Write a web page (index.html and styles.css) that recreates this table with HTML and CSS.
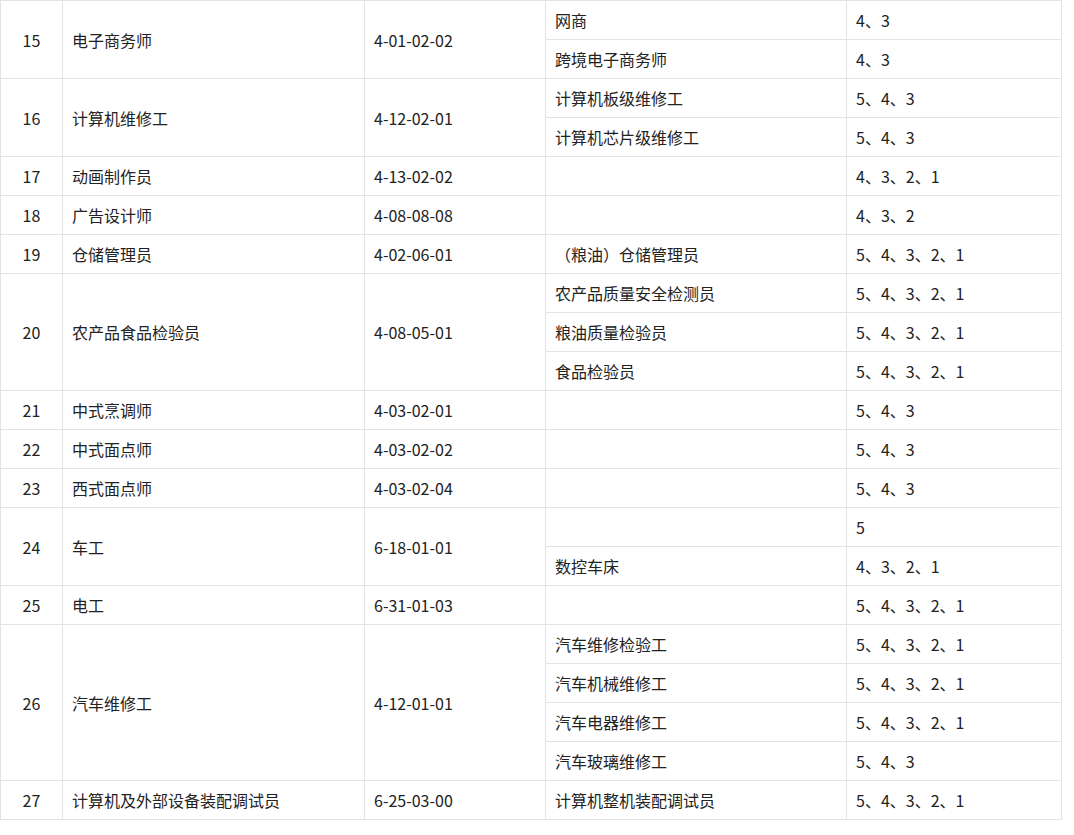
FILE: index.html
```html
<!DOCTYPE html>
<html lang="zh-CN">
<head>
<meta charset="utf-8">
<link rel="stylesheet" href="styles.css">
</head>
<body>
<table class="grid">
<colgroup>
<col class="c-no"><col class="c-name"><col class="c-code"><col class="c-sub"><col class="c-level">
</colgroup>
<tbody>
<tr><td class="no" rowspan="2">15</td><td rowspan="2">电子商务师</td><td rowspan="2">4-01-02-02</td><td>网商</td><td>4、3</td></tr>
<tr><td>跨境电子商务师</td><td>4、3</td></tr>
<tr><td class="no" rowspan="2">16</td><td rowspan="2">计算机维修工</td><td rowspan="2">4-12-02-01</td><td>计算机板级维修工</td><td>5、4、3</td></tr>
<tr><td>计算机芯片级维修工</td><td>5、4、3</td></tr>
<tr><td class="no">17</td><td>动画制作员</td><td>4-13-02-02</td><td></td><td>4、3、2、1</td></tr>
<tr><td class="no">18</td><td>广告设计师</td><td>4-08-08-08</td><td></td><td>4、3、2</td></tr>
<tr><td class="no">19</td><td>仓储管理员</td><td>4-02-06-01</td><td>（粮油）仓储管理员</td><td>5、4、3、2、1</td></tr>
<tr><td class="no" rowspan="3">20</td><td rowspan="3">农产品食品检验员</td><td rowspan="3">4-08-05-01</td><td>农产品质量安全检测员</td><td>5、4、3、2、1</td></tr>
<tr><td>粮油质量检验员</td><td>5、4、3、2、1</td></tr>
<tr><td>食品检验员</td><td>5、4、3、2、1</td></tr>
<tr><td class="no">21</td><td>中式烹调师</td><td>4-03-02-01</td><td></td><td>5、4、3</td></tr>
<tr><td class="no">22</td><td>中式面点师</td><td>4-03-02-02</td><td></td><td>5、4、3</td></tr>
<tr><td class="no">23</td><td>西式面点师</td><td>4-03-02-04</td><td></td><td>5、4、3</td></tr>
<tr><td class="no" rowspan="2">24</td><td rowspan="2">车工</td><td rowspan="2">6-18-01-01</td><td></td><td>5</td></tr>
<tr><td>数控车床</td><td>4、3、2、1</td></tr>
<tr><td class="no">25</td><td>电工</td><td>6-31-01-03</td><td></td><td>5、4、3、2、1</td></tr>
<tr><td class="no" rowspan="4">26</td><td rowspan="4">汽车维修工</td><td rowspan="4">4-12-01-01</td><td>汽车维修检验工</td><td>5、4、3、2、1</td></tr>
<tr><td>汽车机械维修工</td><td>5、4、3、2、1</td></tr>
<tr><td>汽车电器维修工</td><td>5、4、3、2、1</td></tr>
<tr><td>汽车玻璃维修工</td><td>5、4、3</td></tr>
<tr><td class="no">27</td><td>计算机及外部设备装配调试员</td><td>6-25-03-00</td><td>计算机整机装配调试员</td><td>5、4、3、2、1</td></tr>
</tbody>
</table>
</body>
</html>
```

FILE: styles.css
```css
html, body {
  margin: 0;
  padding: 0;
  background: #ffffff;
}
.grid {
  border-collapse: collapse;
  table-layout: fixed;
  width: 1061px;
  font-family: "Noto Sans CJK SC", "Noto Sans", sans-serif;
  font-size: 16px;
  color: #222222;
}
.c-no { width: 62px; }
.c-name { width: 302px; }
.c-code { width: 181px; }
.c-sub { width: 301px; }
.c-level { width: 215px; }
.grid td {
  border: 1px solid #e3e3e3;
  height: 39px;
  padding: 0 9px;
  box-sizing: border-box;
  vertical-align: middle;
  line-height: 20px;
  white-space: nowrap;
}
.grid td.no {
  text-align: center;
  padding: 0;
}
```
